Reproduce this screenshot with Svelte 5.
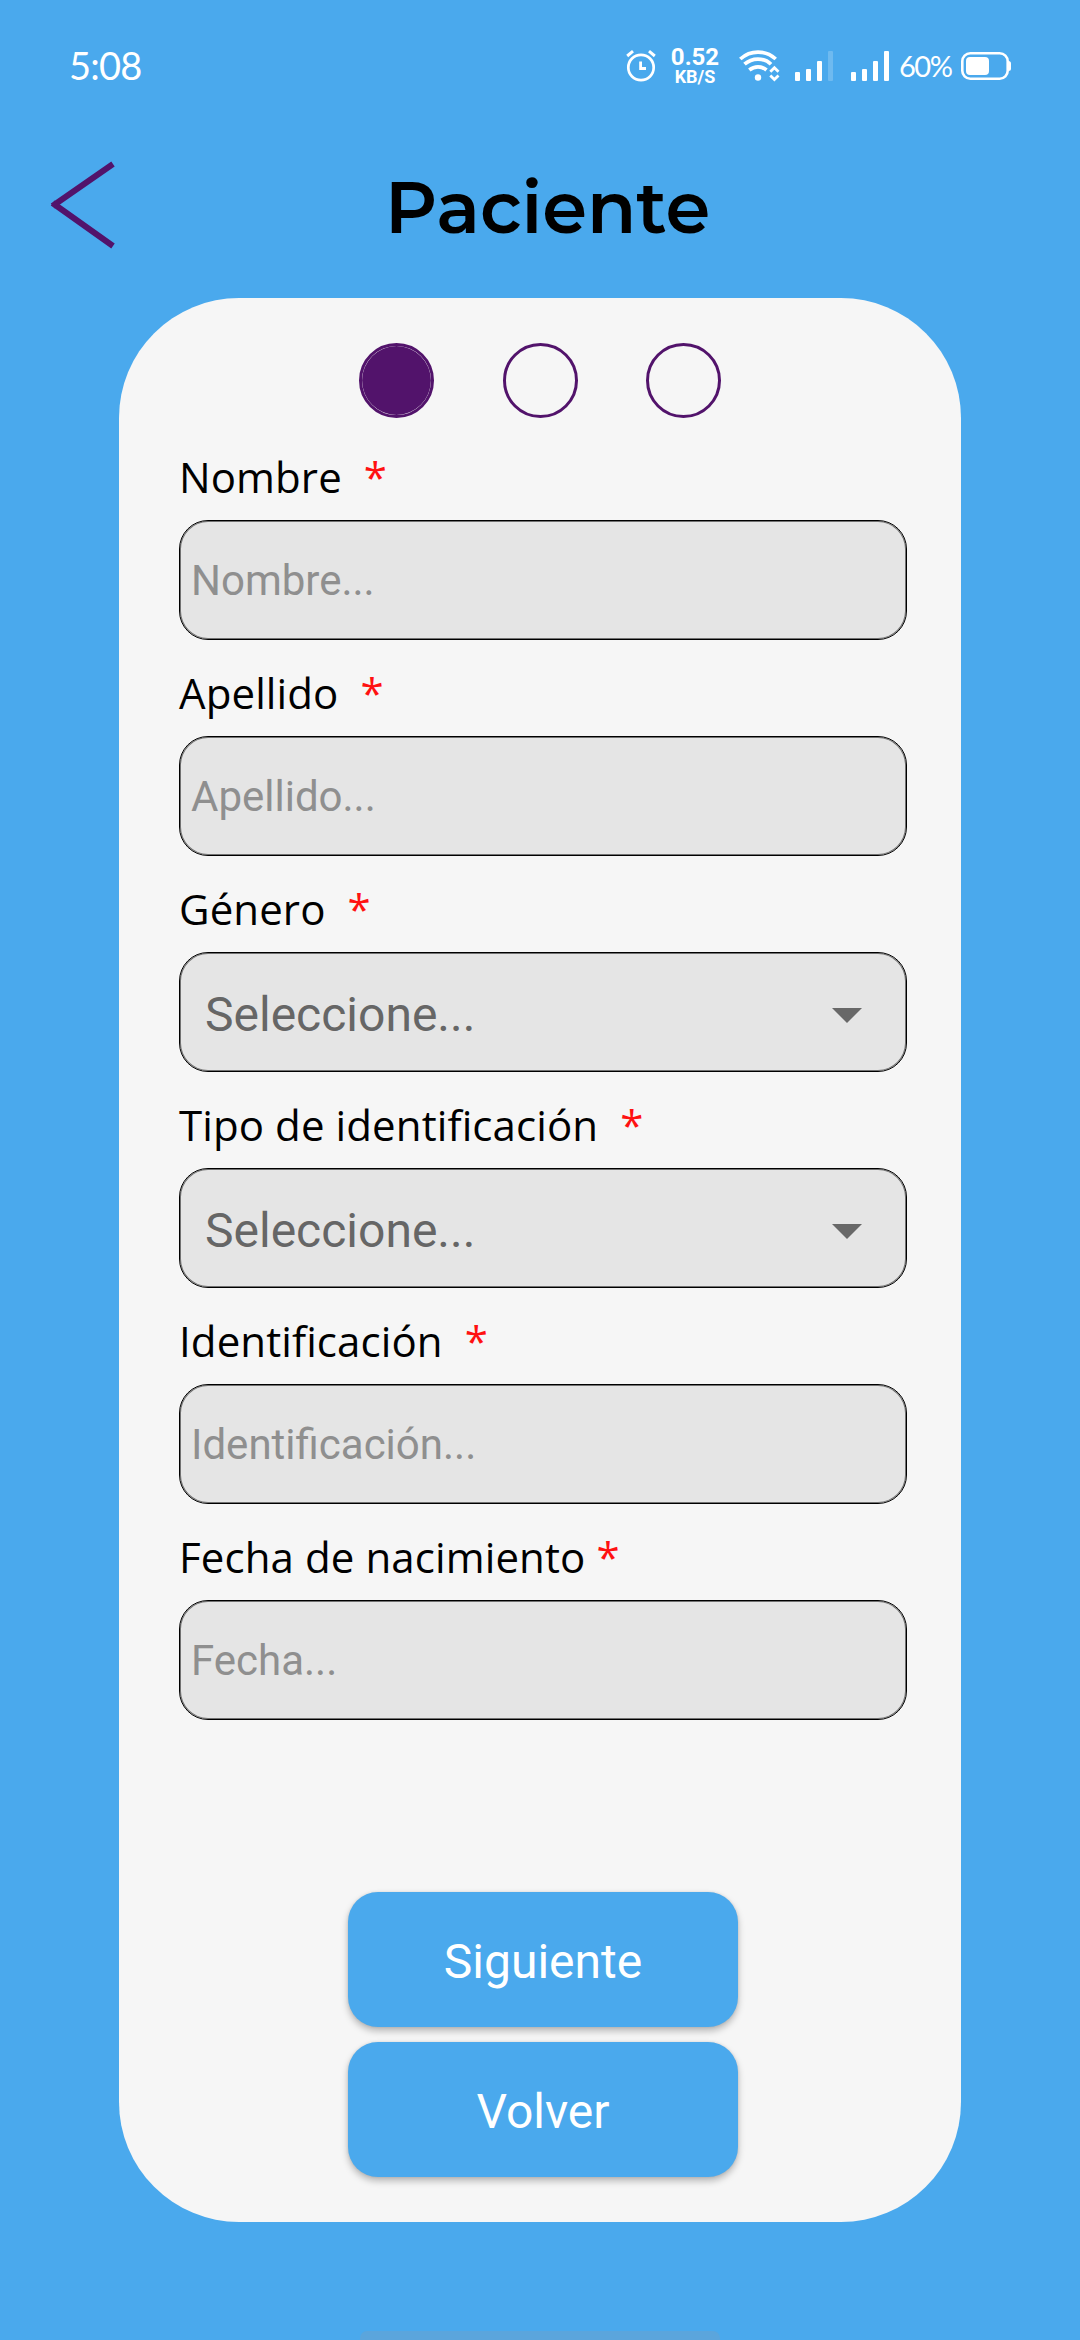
<script>
  const fields = [
    { label: 'Nombre', hint: 'Nombre...', gap: 2 },
    { label: 'Apellido', hint: 'Apellido...', gap: 2 },
    { label: 'Género', hint: 'Seleccione...', gap: 2, select: true },
    { label: 'Tipo de identificación', hint: 'Seleccione...', gap: 2, select: true },
    { label: 'Identificación', hint: 'Identificación...', gap: 2 },
    { label: 'Fecha de nacimiento', hint: 'Fecha...', gap: 1 }
  ];
  const steps = [true, false, false];
</script>

<div class="screen">
  <div class="status">
    <span class="time">5:08</span>
    <svg class="alarm" viewBox="0 0 30 32" width="30" height="32" fill="none" stroke="#fff">
      <circle cx="15" cy="17.5" r="12.7" stroke-width="2.7" />
      <path d="M1.2 6 7 1.2M28.8 6 23 1.2" stroke-width="3" />
      <path d="M14.6 11.5V18.5H20" stroke-width="2.8" />
    </svg>
    <div class="speed"><b>0.52</b><small>KB/S</small></div>
    <svg class="wifi" viewBox="0 0 41 32" width="41" height="32" fill="none" stroke="#fff" stroke-width="3.7">
      <path d="M1.3 9C11.5-.3 26.5-.3 36.7 9" />
      <path d="M5.5 14.2C13 7.3 25 7.3 32 14.2" />
      <path d="M10.3 20C15.5 15.7 22.5 15.7 27.5 20" />
      <circle cx="19" cy="27.5" r="3.2" fill="#fff" stroke="none" />
      <path d="M31.3 21.8 35.4 17.8 39.5 21.8M31.3 25.6 35.4 29.6 39.5 25.6" stroke-width="2.8" />
    </svg>
    <svg class="signal" viewBox="0 0 38 30" width="38" height="30" fill="#fff">
      <rect x="0" y="21" width="5" height="9" rx="1" />
      <rect x="11" y="18" width="5" height="12" rx="1" />
      <rect x="22" y="10" width="5" height="20" rx="1" />
      <rect x="33" y="0" width="5" height="30" rx="1" opacity=".2" />
    </svg>
    <svg class="signal second" viewBox="0 0 38 30" width="38" height="30" fill="#fff">
      <rect x="0" y="21" width="5" height="9" rx="1" />
      <rect x="11" y="18" width="5" height="12" rx="1" />
      <rect x="22" y="10" width="5" height="20" rx="1" />
      <rect x="33" y="0" width="5" height="30" rx="1" />
    </svg>
    <span class="percent">60%</span>
    <svg class="battery" viewBox="0 0 50 28" width="50" height="28">
      <rect x="1.3" y="1.3" width="45.4" height="25.4" rx="8" fill="none" stroke="#fff" stroke-width="2.6" />
      <rect x="5" y="5" width="23" height="18" rx="4" fill="#fff" />
      <path d="M47.5 9q2.500 0 2.500 2.500v5q0 2.500-2.500 2.500z" fill="#fff" />
    </svg>
  </div>

  <header>
    <svg class="back" viewBox="0 0 66 88" width="66" height="88" fill="none" stroke="#52136b" stroke-width="6">
      <path d="M63 3 2.5 45M2.5 42 63 85" />
    </svg>
    <h1>Paciente</h1>
  </header>

  <main>
    <div class="steps">
      {#each steps as active}
        <svg viewBox="0 0 75 75" width="75" height="75" fill="none" stroke="#52136b" stroke-width="3">
          <circle cx="37.5" cy="37.5" r="36" />
          {#if active}<circle cx="37.5" cy="37.5" r="34.4" fill="#52136b" stroke="none" />{/if}
        </svg>
      {/each}
    </div>

    <form>
      {#each fields as f, i}
        <label for={'f' + i}><span class="name">{f.label}</span>{'\u00a0'.repeat(f.gap)}<i>*</i></label>
        {#if f.select}
          <button type="button" id={'f' + i} class="box select">
            <span>{f.hint}</span>
            <svg viewBox="0 0 30 15" width="30" height="15"><path d="M0 0H30L15 15z" fill="#686868" /></svg>
          </button>
        {:else}
          <input id={'f' + i} class="box" placeholder={f.hint} />
        {/if}
      {/each}
    </form>

    <div class="actions">
      <button type="button">Siguiente</button>
      <button type="button">Volver</button>
    </div>
  </main>

  <footer><div class="handle"></div></footer>
</div>

<style>
  :global(body) { background: #4aa9ed; }
  .screen {
    width: 1080px;
    height: 2340px;
    box-sizing: border-box;
    overflow: hidden;
    display: flex;
    flex-direction: column;
    background: #4aa9ed;
    font-family: Roboto, sans-serif;
  }
  svg { display: block; flex: none; }
  .status {
    height: 132px;
    box-sizing: border-box;
    padding: 0 69px;
    display: flex;
    align-items: center;
    color: #fff;
    flex: none;
  }
  .time { font: 400 38px/40px Lato, sans-serif; letter-spacing: -0.8px; margin-right: auto; padding-bottom: 2px; }
  .alarm { margin-right: 15px; }
  .speed {
    width: 48px;
    margin-right: 20px;
    display: flex;
    flex-direction: column;
    align-items: center;
    white-space: nowrap;
  }
  .speed b { font-size: 24px; line-height: 22px; font-weight: 700; }
  .speed small { font-size: 18px; line-height: 18px; font-weight: 700; }
  .wifi { margin-right: 15px; }
  .signal { margin-right: 18px; }
  .signal.second { margin-right: 10px; }
  .percent { width: 51px; font: 400 29px/40px Lato, sans-serif; letter-spacing: -1.5px; margin-right: 11px; }

  header {
    height: 166px;
    flex: none;
    display: flex;
    align-items: flex-start;
    padding-left: 50px;
  }
  .back { margin-top: 29px; }
  h1 {
    margin: 31px 0 0 269px;
    font: 600 72px/88px Montserrat, Inter, sans-serif;
    color: #000;
  }

  main {
    width: 842px;
    height: 1924px;
    box-sizing: border-box;
    flex: none;
    margin-left: 119px;
    padding: 45px 54px 45px 60px;
    border-radius: 120px;
    background: #f6f6f6;
    display: flex;
    flex-direction: column;
  }
  .steps { display: flex; justify-content: center; gap: 68.5px; padding-right: 6px; }
  form { display: flex; flex-direction: column; }
  label {
    height: 96px;
    box-sizing: border-box;
    padding-top: 24px;
    font: 400 42px/57px "Open Sans", "Noto Sans", sans-serif;
    letter-spacing: 0.1px;
    color: #000;
    white-space: pre;
  }
  form label:first-child { height: 102px; padding-top: 30px; }
  i { font-style: normal; color: #f11; }
  .box {
    width: 728px;
    height: 120px;
    box-sizing: border-box;
    border: 1px solid #000;
    box-shadow: inset 0 0 0 1px rgba(0, 0, 0, .5);
    border-radius: 29px;
    background: #e5e5e5;
    padding: 0 11px;
    margin: 0;
    font: 400 42px/50px Roboto, sans-serif;
    color: #000;
    outline: none;
  }
  .box::placeholder { color: #8f8f8f; opacity: 1; }
  .select {
    display: flex;
    align-items: center;
    justify-content: space-between;
    padding: 6px 44px 0 25px;
    font-size: 48px;
    line-height: 56px;
    color: #666;
  }
  .actions {
    margin-top: auto;
    display: flex;
    flex-direction: column;
    align-items: center;
    gap: 15px;
  }
  .actions button {
    width: 390px;
    height: 135px;
    border: 0;
    border-radius: 30px;
    padding: 4px 0 0;
    background: #4aa9ed;
    color: #fff;
    font: 400 48px/56px Roboto, sans-serif;
    box-shadow: 0 4px 7px rgba(0, 0, 0, .26), 0 0 3px rgba(0, 0, 0, .1);
  }
  footer { flex: 1; display: flex; justify-content: center; align-items: flex-end; }
  .handle { width: 360px; height: 9px; border-radius: 7px 7px 0 0; background: #5ba5dc; }
</style>
